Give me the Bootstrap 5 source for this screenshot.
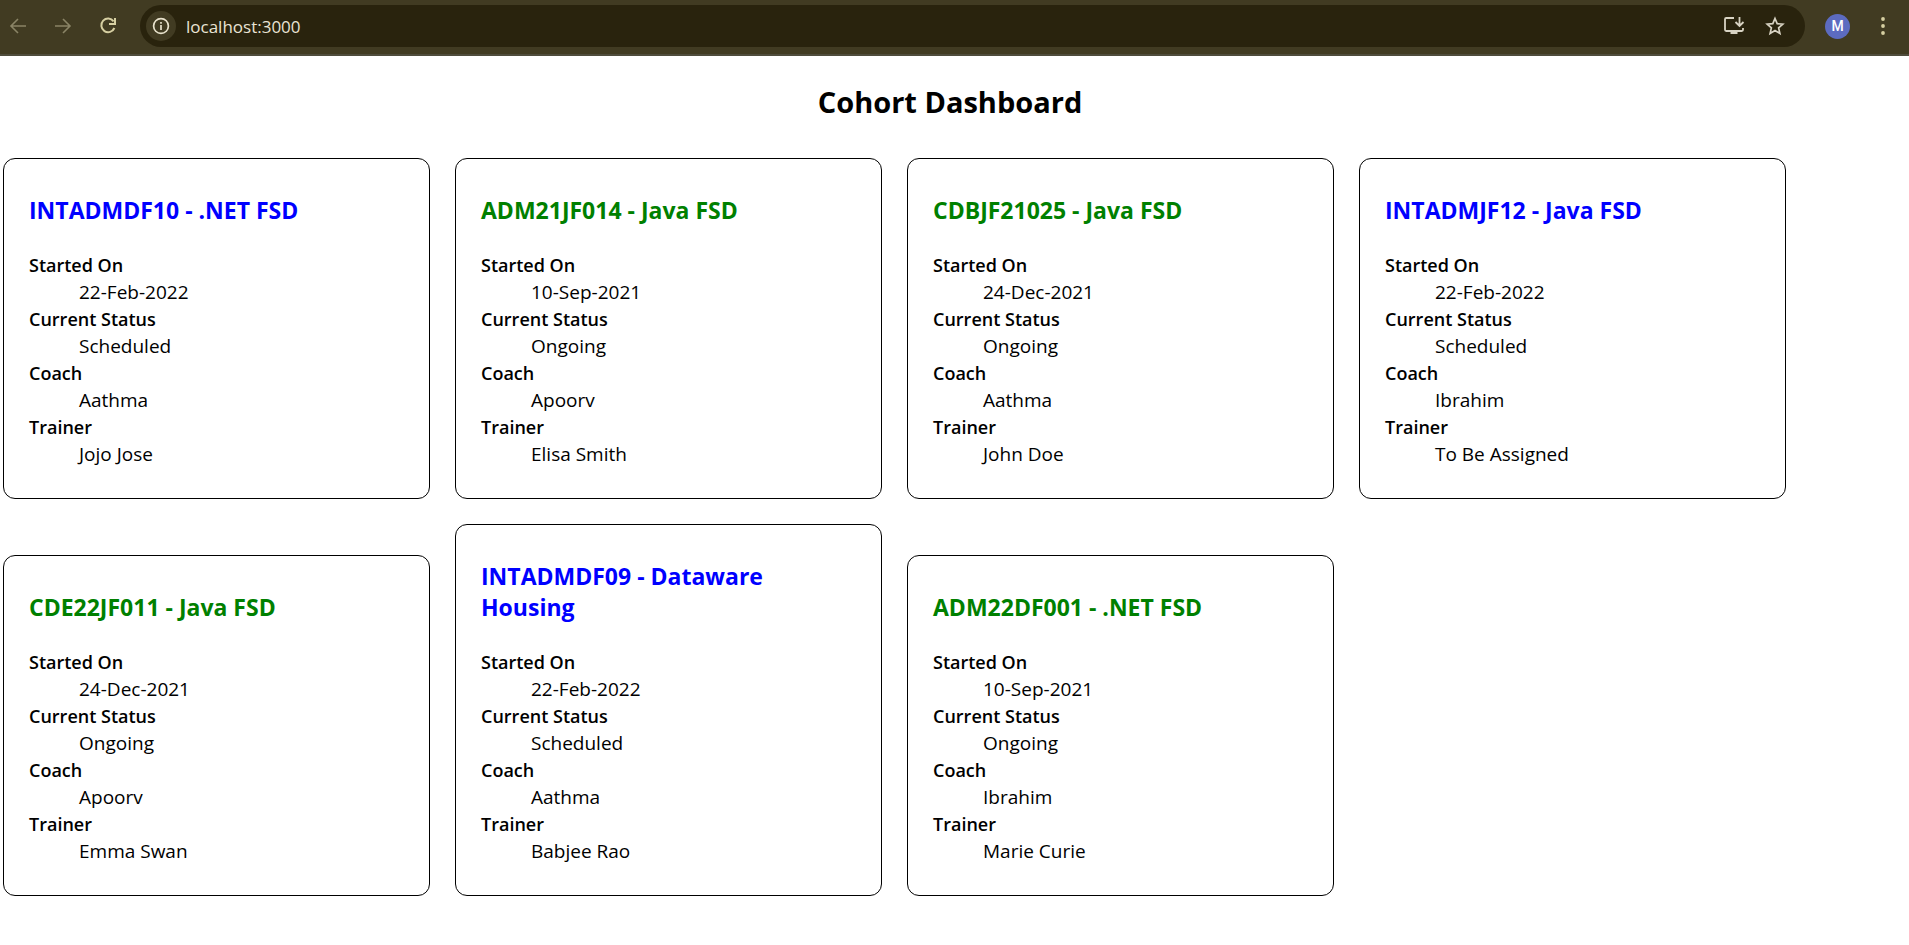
<!DOCTYPE html>
<html lang="en">
<head>
<meta charset="utf-8">
<meta name="viewport" content="width=device-width, initial-scale=1">
<title>Cohort Dashboard</title>
<link href="https://cdn.jsdelivr.net/npm/bootstrap@5.3.0/dist/css/bootstrap.min.css" rel="stylesheet">
<style>
body { font-family: "Open Sans", "Noto Sans", sans-serif; font-size: 19px; line-height: 27px; color: #000; background: #fff; }
.browser-bar { background: #413b22; border-bottom: 2px solid #4f4c3c; padding: 5px 14px 7px 5px; gap: 20px; height: 56px; }
.icon-btn { border: 0; background: none; padding: 0; width: 25px; height: 25px; color: #d6cfa2; display: flex; align-items: center; justify-content: center; flex: none; }
.icon-btn:disabled { color: #8a8466; }
.icon-btn svg { display: block; flex: none; }
.address { background: #29230d; border-radius: 21px; height: 42px; padding: 0 18px 0 6px; }
.address .icon-btn { color: #d8d3c3; }
.address .site-info { width: 30px; height: 30px; border-radius: 50%; background: #413b22; color: #e8e2cc; }
.address input { background: none; border: 0; outline: 0; color: #e9e4d4; font-size: 17px; padding: 0; margin-left: 10px; min-width: 0; }
.avatar { background: #5c6bc0; color: #fff; border-radius: 50%; font: 500 14px/25px Roboto, sans-serif; }
.dashboard { padding: 0 12px 0 3px; }
.page-title { font-size: 29px; line-height: 40px; font-weight: 700; margin: 26px 0 36px; }
.cohorts { display: grid; grid-template-columns: repeat(auto-fill, 427px); gap: 25px; align-items: end; }
.cohort { border: 1px solid #000; border-radius: 12px; padding: 36px 25px 30px; }
.cohort h3 { font-size: 23px; line-height: 31px; font-weight: 700; margin: 0 0 26px; color: green; }
.cohort.scheduled h3 { color: blue; }
.cohort dl { margin: 0; }
.cohort dt { font-size: 18px; font-weight: 600; }
.cohort dd { margin: 0 0 0 50px; }
</style>
</head>
<body>
<header class="browser-bar d-flex align-items-center">
  <button class="icon-btn" disabled aria-label="Back"><svg width="18" height="18" viewBox="0 0 18 18" fill="none" stroke="currentColor" stroke-width="1.6"><path d="M17 9H2M9 2L2 9l7 7"/></svg></button>
  <button class="icon-btn" disabled aria-label="Forward"><svg width="18" height="18" viewBox="0 0 18 18" fill="none" stroke="currentColor" stroke-width="1.6"><path d="M1 9h15M9 2l7 7-7 7"/></svg></button>
  <button class="icon-btn" aria-label="Reload"><svg width="18" height="18" viewBox="0 0 18 18" fill="none" stroke="currentColor" stroke-width="2"><path d="M14.600 4.300A6.800 6.800 0 1 0 15.400 11M16 1v6h-6"/></svg></button>
  <div class="address d-flex align-items-center flex-grow-1">
    <button class="icon-btn site-info" aria-label="Site information"><svg width="18" height="18" viewBox="0 0 18 18" fill="none" stroke="currentColor" stroke-width="1.7"><circle cx="9" cy="9" r="7.4"/><path d="M9 8v5M9 5v1.8"/></svg></button>
    <input class="flex-grow-1" type="text" value="localhost:3000" aria-label="Address">
    <button class="icon-btn me-3" aria-label="Install app"><svg width="22" height="20" viewBox="0 0 22 20" fill="none" stroke="currentColor" stroke-width="1.8"><path d="M11 2H3.200Q2 2 2 3.200v10.600Q2 15 3.200 15h15.600Q20 15 20 13.800V12M16.500 1v8.500M12.500 6l4 4 4-4"/><path d="M7.500 15v3h7v-3z" fill="currentColor" stroke="none"/></svg></button>
    <button class="icon-btn" aria-label="Bookmark"><svg width="20" height="20" viewBox="0 0 20 20" fill="none" stroke="currentColor" stroke-width="1.7"><path d="M10 2.500l2.200 5.200 5.600.500-4.200 3.700 1.300 5.500-4.900-2.900-4.900 2.900 1.300-5.500-4.200-3.700 5.600-.500z"/></svg></button>
  </div>
  <button class="icon-btn avatar" aria-label="Profile">M</button>
  <button class="icon-btn" aria-label="Menu"><svg width="6" height="20" viewBox="0 0 6 20" fill="currentColor"><circle cx="3" cy="3" r="1.900"/><circle cx="3" cy="10" r="1.900"/><circle cx="3" cy="17" r="1.900"/></svg></button>
</header>
<main class="dashboard">
  <h1 class="page-title text-center">Cohort Dashboard</h1>
  <div class="cohorts">
    <section class="cohort scheduled"><h3>INTADMDF10 - .NET FSD</h3><dl><dt>Started On</dt><dd>22-Feb-2022</dd><dt>Current Status</dt><dd>Scheduled</dd><dt>Coach</dt><dd>Aathma</dd><dt>Trainer</dt><dd>Jojo Jose</dd></dl></section>
    <section class="cohort"><h3>ADM21JF014 - Java FSD</h3><dl><dt>Started On</dt><dd>10-Sep-2021</dd><dt>Current Status</dt><dd>Ongoing</dd><dt>Coach</dt><dd>Apoorv</dd><dt>Trainer</dt><dd>Elisa Smith</dd></dl></section>
    <section class="cohort"><h3>CDBJF21025 - Java FSD</h3><dl><dt>Started On</dt><dd>24-Dec-2021</dd><dt>Current Status</dt><dd>Ongoing</dd><dt>Coach</dt><dd>Aathma</dd><dt>Trainer</dt><dd>John Doe</dd></dl></section>
    <section class="cohort scheduled"><h3>INTADMJF12 - Java FSD</h3><dl><dt>Started On</dt><dd>22-Feb-2022</dd><dt>Current Status</dt><dd>Scheduled</dd><dt>Coach</dt><dd>Ibrahim</dd><dt>Trainer</dt><dd>To Be Assigned</dd></dl></section>
    <section class="cohort"><h3>CDE22JF011 - Java FSD</h3><dl><dt>Started On</dt><dd>24-Dec-2021</dd><dt>Current Status</dt><dd>Ongoing</dd><dt>Coach</dt><dd>Apoorv</dd><dt>Trainer</dt><dd>Emma Swan</dd></dl></section>
    <section class="cohort scheduled"><h3>INTADMDF09 - Dataware Housing</h3><dl><dt>Started On</dt><dd>22-Feb-2022</dd><dt>Current Status</dt><dd>Scheduled</dd><dt>Coach</dt><dd>Aathma</dd><dt>Trainer</dt><dd>Babjee Rao</dd></dl></section>
    <section class="cohort"><h3>ADM22DF001 - .NET FSD</h3><dl><dt>Started On</dt><dd>10-Sep-2021</dd><dt>Current Status</dt><dd>Ongoing</dd><dt>Coach</dt><dd>Ibrahim</dd><dt>Trainer</dt><dd>Marie Curie</dd></dl></section>
  </div>
</main>
<script src="https://cdn.jsdelivr.net/npm/bootstrap@5.3.0/dist/js/bootstrap.bundle.min.js"></script>
</body>
</html>
